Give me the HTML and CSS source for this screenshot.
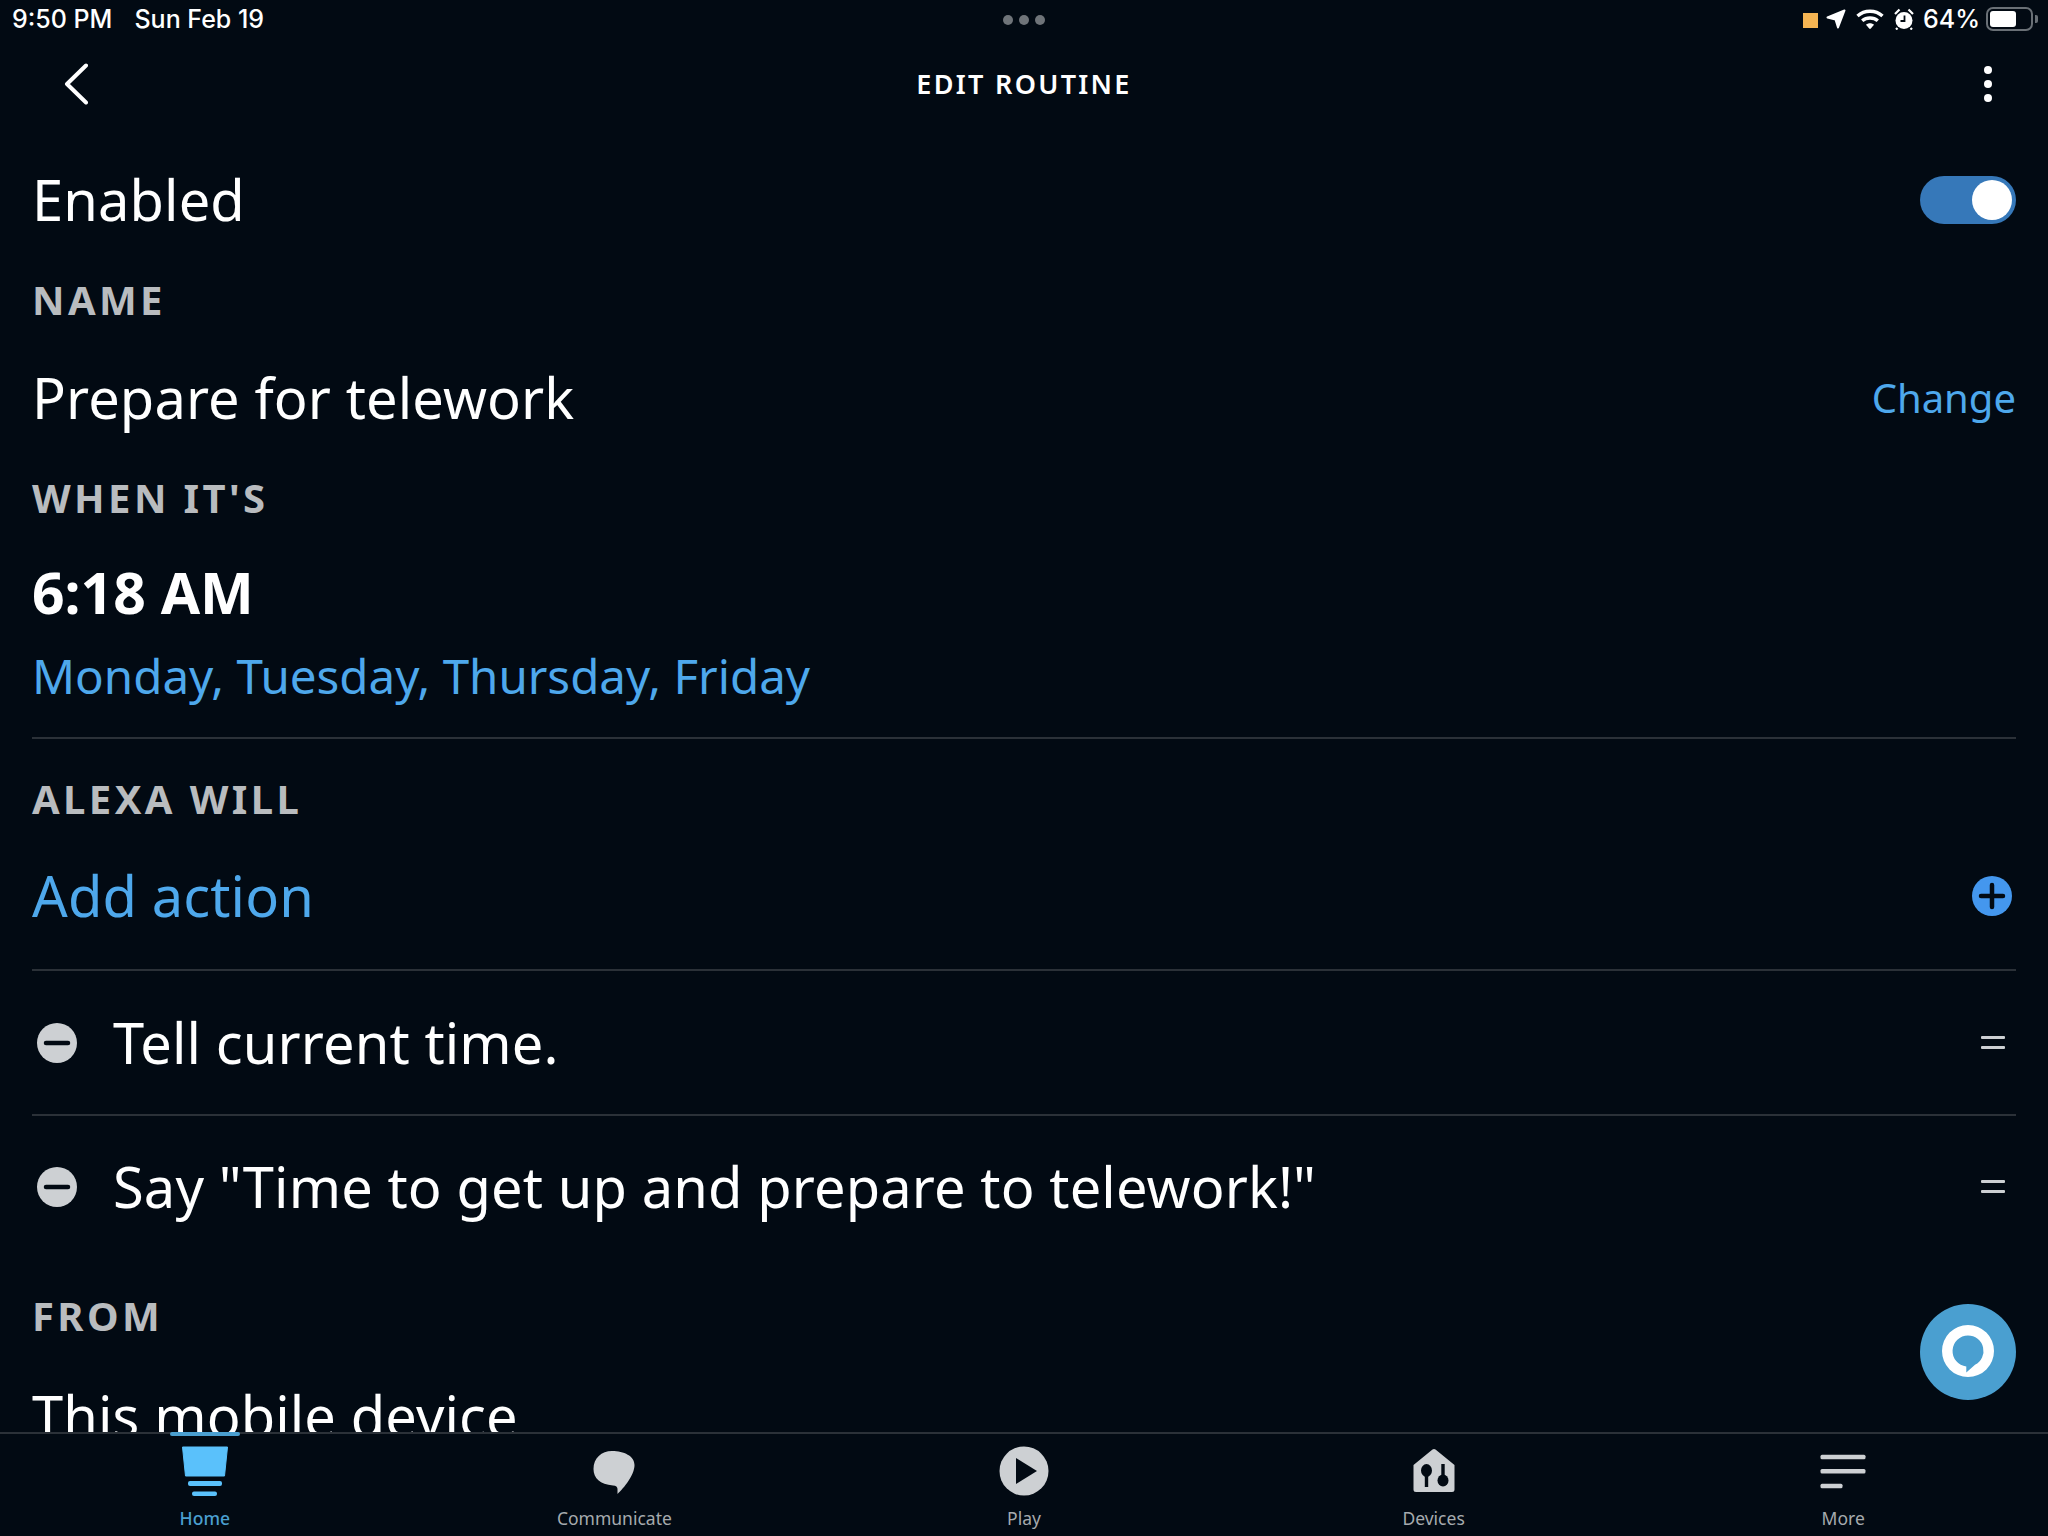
FILE: index.html
```html
<!DOCTYPE html>
<html lang="en">
<head>
<meta charset="utf-8">
<title>Edit Routine</title>
<link rel="stylesheet" href="styles.css">
</head>
<body>
<div class="app">
  <div class="status">
    <div class="status-left"><span>9:50 PM</span><span>Sun Feb 19</span></div>
    <div class="status-dots"><i></i><i></i><i></i></div>
    <div class="status-right">
      <span class="rec"></span>
      <svg class="st-loc" viewBox="0 0 20 20"><path d="M1.500 8.500 18.500 1.500 12 18.500 9.500 10.500Z" fill="#fff" stroke="#fff" stroke-width="2" stroke-linejoin="round"/></svg>
      <svg class="st-wifi" viewBox="0 0 28 20"><g fill="none" stroke="#fff" stroke-width="3.400"><path d="M1.500 7C8.500 .6 19.500 .6 26.500 7"/><path d="M6.200 11.800C10.500 8 17.500 8 21.800 11.800"/></g><path d="M10 15.800C12.300 13.800 15.700 13.800 18 15.800L14.800 19.500C14.300 20 13.700 20 13.200 19.500Z" fill="#fff"/></svg>
      <svg class="st-alarm" viewBox="0 0 20 22"><circle cx="10" cy="12.500" r="8.500" fill="#fff"/><path d="M10.500 7.500V13H6.500" fill="none" stroke="#020a13" stroke-width="1.800"/><path d="M1 6 5.500 1.500M19 6 14.500 1.500M3.500 20 2 21.500M16.500 20 18 21.500" stroke="#fff" stroke-width="2.200"/></svg>
      <span class="st-pct">64%</span>
      <span class="battery"><span class="battery-fill"></span></span>
      <span class="battery-tip"></span>
    </div>
  </div>

  <header class="topbar">
    <svg class="back" viewBox="0 0 24 42"><path d="M22 2.500 3 21 22 39.500" fill="none" stroke="#fff" stroke-width="4" stroke-linecap="round" stroke-linejoin="round"/></svg>
    <h1 class="title">EDIT ROUTINE</h1>
    <div class="kebab"><i></i><i></i><i></i></div>
  </header>

  <main class="content">
    <div class="row row-enabled">
      <span class="big">Enabled</span>
      <span class="toggle"><span class="knob"></span></span>
    </div>
    <div class="label label-name">NAME</div>
    <div class="row row-name">
      <span class="big">Prepare for telework</span>
      <span class="link-sm">Change</span>
    </div>
    <div class="label label-when">WHEN IT'S</div>
    <div class="time">6:18 AM</div>
    <div class="days">Monday, Tuesday, Thursday, Friday</div>
    <div class="label label-alexa">ALEXA WILL</div>
    <div class="row row-add">
      <span class="big link">Add action</span>
      <svg class="plus" viewBox="0 0 40 40"><circle cx="20" cy="20" r="20" fill="#4497ee"/><path d="M20 9V31M9 20H31" stroke="#020a13" stroke-width="4.500" stroke-linecap="round"/></svg>
    </div>
    <div class="row action">
      <div class="action-main">
        <svg class="minus" viewBox="0 0 40 40"><circle cx="20" cy="20" r="20" fill="#cdd0d3"/><path d="M9 20H31" stroke="#020a13" stroke-width="4.500" stroke-linecap="round"/></svg>
        <span class="big">Tell current time.</span>
      </div>
      <span class="grip"><i></i><i></i></span>
    </div>
    <div class="row action action-last">
      <div class="action-main">
        <svg class="minus" viewBox="0 0 40 40"><circle cx="20" cy="20" r="20" fill="#cdd0d3"/><path d="M9 20H31" stroke="#020a13" stroke-width="4.500" stroke-linecap="round"/></svg>
        <span class="big">Say "Time to get up and prepare to telework!"</span>
      </div>
      <span class="grip"><i></i><i></i></span>
    </div>
    <div class="label label-from">FROM</div>
    <div class="big from">This mobile device</div>
    <button class="fab" type="button" aria-label="Alexa">
      <svg viewBox="0 0 52 52"><path fill-rule="evenodd" fill="#fff" d="M26 0A26 26 0 1 0 26 52A26 26 0 1 0 26 0ZM26 10.500A15.500 15.500 0 0 0 24.300 41.400L24.300 47.500 33 39.830A15.500 15.500 0 0 0 26 10.500Z"/></svg>
    </button>
  </main>

  <nav class="tabs">
    <div class="tab tab-active">
      <span class="tab-marker"></span>
      <svg class="tab-icon" viewBox="0 0 46 50"><path d="M.5 1H45.500L42.500 30H3.500Z" fill="#5ac1fb" stroke="#5ac1fb" stroke-linejoin="round"/><rect x="6" y="35" width="34" height="5" rx="2" fill="#5ac1fb"/><rect x="10" y="45.500" width="25" height="4.500" rx="2" fill="#5ac1fb"/></svg>
      <span>Home</span>
    </div>
    <div class="tab">
      <svg class="tab-icon" viewBox="0 0 46 50"><path d="M21 5C10.500 5 2.500 12 2.500 23C2.500 32 9 38.500 22 39.500C25 39.700 26.500 41 26.500 43V48C33 42 43.500 29 43.500 19C43.500 10 33 5 21 5Z" fill="#cdd0d3"/></svg>
      <span>Communicate</span>
    </div>
    <div class="tab">
      <svg class="tab-icon" viewBox="0 0 50 50"><circle cx="25" cy="25" r="24.500" fill="#cdd0d3"/><path d="M17 12 38 25 17 38Z" fill="#020a13"/></svg>
      <span>Play</span>
    </div>
    <div class="tab">
      <svg class="tab-icon" viewBox="0 0 46 50"><path d="M21.500 3.500C22.300 2.800 23.700 2.800 24.500 3.500L43.500 19V43.500C43.500 45.200 42.700 46 41 46H5C3.300 46 2.500 45.200 2.500 43.500V19Z" fill="#cdd0d3"/><g fill="#020a13"><ellipse cx="15.500" cy="24.500" rx="5.500" ry="6.500"/><rect x="13.800" y="26" width="3.400" height="15"/><ellipse cx="32" cy="34.500" rx="5.500" ry="6"/><rect x="30.300" y="18" width="3.400" height="14"/></g></svg>
      <span>Devices</span>
    </div>
    <div class="tab">
      <svg class="tab-icon" viewBox="0 0 46 50"><rect x=".5" y="8.700" width="45" height="4.500" rx="1.500" fill="#cdd0d3"/><rect x=".5" y="23" width="45" height="4.500" rx="1.500" fill="#cdd0d3"/><rect x=".5" y="37.700" width="22" height="4.500" rx="1.500" fill="#cdd0d3"/></svg>
      <span>More</span>
    </div>
  </nav>
</div>
</body>
</html>
```
FILE: styles.css
```css
* { box-sizing: border-box; }
html, body { margin: 0; padding: 0; background: #020a13; }
body { width: 2048px; height: 1536px; overflow: hidden; font-family: "Noto Sans", "Open Sans", sans-serif; color: #fff; }
.app { width: 2048px; height: 1536px; display: flex; flex-direction: column; }

.status { height: 40px; padding: 0 10px 2px 12px; display: flex; align-items: center; justify-content: space-between; font-family: Inter, "Liberation Sans", sans-serif; font-size: 25px; font-weight: 500; position: relative; }
.status-left { display: flex; gap: 22px; }
.status-dots { position: absolute; left: 1003px; top: 15px; display: flex; gap: 6px; }
.status-dots i { width: 10px; height: 10px; border-radius: 50%; background: #6f7479; }
.status-right { display: flex; align-items: center; }
.rec { width: 15px; height: 15px; background: #f5b553; margin: 2px 8px 0 0; }
.st-loc { width: 20px; height: 20px; margin-right: 10px; }
.st-wifi { width: 28px; height: 20px; margin-right: 10px; }
.st-alarm { width: 20px; height: 22px; margin-right: 9px; }
.st-pct { margin-right: 6px; }
.battery { width: 47px; height: 24px; border: 2px solid #6a7076; border-radius: 7px; padding: 2px; display: flex; }
.battery-fill { width: 26px; height: 100%; background: #fff; border-radius: 3px; }
.battery-tip { width: 3px; height: 8px; background: #6a7076; border-radius: 0 2px 2px 0; margin-left: 2px; }

.topbar { height: 90px; padding-bottom: 3px; position: relative; display: flex; align-items: center; justify-content: center; }
.back { position: absolute; left: 64px; top: 23px; width: 24px; height: 42px; }
.title { margin: 0; font-size: 27px; font-weight: 600; letter-spacing: 2.300px; line-height: 1; }
.kebab { position: absolute; left: 1984px; top: 26px; display: flex; flex-direction: column; gap: 6px; }
.kebab i { width: 8px; height: 8px; border-radius: 50%; background: #fff; }

.content { flex: 1; min-height: 0; position: relative; overflow: hidden; padding: 0 32px; }
.row { display: flex; align-items: center; justify-content: space-between; }
.big { font-size: 56px; line-height: 64px; letter-spacing: .12px; white-space: nowrap; }
.row .big { margin-bottom: 2px; }
.link { color: #4ea8ec; }
.link-sm { color: #4ea8ec; font-size: 40px; line-height: 48px; }
.label { font-size: 40px; line-height: 44px; font-weight: 700; letter-spacing: 3.400px; color: #b9bcbf; }

.row-enabled { height: 140px; }
.toggle { width: 96px; height: 48px; border-radius: 24px; background: #3678b9; display: flex; align-items: center; justify-content: flex-end; padding-right: 4px; }
.knob { width: 40px; height: 40px; border-radius: 50%; background: #fff; }
.label-name { height: 60px; padding-top: 8px; }
.row-name { height: 136px; }
.label-when { height: 64px; padding-top: 10px; }
.time { height: 124px; padding-top: 30px; font-size: 57px; line-height: 64px; font-weight: 700; }
.days { height: 93px; margin-top: -8px; color: #4ea8ec; font-size: 47.500px; line-height: 60px; border-bottom: 2px solid #2b3138; }
.label-alexa { height: 84px; padding-top: 38px; }
.row-add { height: 148px; border-bottom: 2px solid #2b3138; }
.plus { width: 40px; height: 40px; margin-right: 4px; }
.action { height: 145px; border-bottom: 2px solid #2b3138; }
.action-last { border-bottom: 0; padding-bottom: 4px; }
.action-main { display: flex; align-items: center; gap: 36px; padding-left: 5px; }
.minus { width: 40px; height: 40px; }
.grip { display: flex; flex-direction: column; gap: 7px; margin-right: 11px; }
.grip i { width: 24px; height: 3px; background: #cdd0d3; border-radius: 1px; }
.label-from { height: 84px; padding-top: 33px; }
.from { padding-top: 38px; }
.fab { position: absolute; left: 1920px; top: 1174px; width: 96px; height: 96px; padding: 21px 22px; border: 0; border-radius: 50%; background: #4a9fd0; display: flex; }
.fab svg { width: 52px; height: 52px; flex: none; }

.tabs { height: 104px; flex: none; border-top: 2px solid #2b3138; background: #020a13; display: grid; grid-template-columns: repeat(5, 1fr); position: relative; }
.tab { position: relative; display: flex; flex-direction: column; align-items: center; padding-top: 12px; font-size: 17.500px; line-height: 22px; color: #a6aaae; }
.tab-icon { height: 50px; width: 50px; margin-bottom: 11px; }
.tab-active { color: #4a9fd0; font-weight: 500; }
.tab-marker { position: absolute; top: -2px; width: 70px; height: 4px; border-radius: 2px; background: #4a9fd0; }
```
